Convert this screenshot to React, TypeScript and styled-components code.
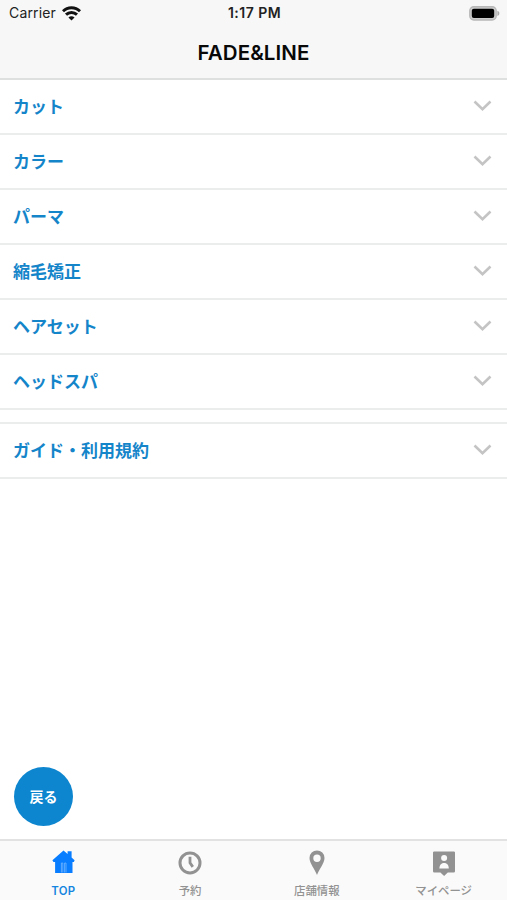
import React from "react";
import styled, { createGlobalStyle } from "styled-components";

const Global = createGlobalStyle`
  * { box-sizing: border-box; }
  body { margin: 0; background: #fff; }
  button { border: 0; padding: 0; background: none; font: inherit; color: inherit; }
`;

const Screen = styled.div`
  display: flex;
  flex-direction: column;
  width: 507px;
  height: 900px;
  overflow: hidden;
  background: #fff;
  font-family: Inter, "Noto Sans CJK JP", sans-serif;
`;

const Header = styled.header`
  height: 80px;
  background: #f7f7f7;
  border-bottom: 2px solid #dedfdf;
`;

const StatusBar = styled.div`
  display: grid;
  grid-template-columns: 1fr auto 1fr;
  align-items: center;
  height: 26px;
  padding: 0 7px 0 9px;
  font-size: 14px;
  line-height: 26px;
  color: #222;
`;

const Carrier = styled.div`
  display: flex;
  align-items: center;
  gap: 6px;
  letter-spacing: 0.15px;
`;

const Time = styled.div`
  font-weight: 600;
  font-size: 14px;
  letter-spacing: 0.45px;
`;

const Battery = styled.svg`
  justify-self: end;
`;

const Title = styled.h1`
  margin: 0;
  font-size: 20.5px;
  font-weight: 600;
  line-height: 53px;
  letter-spacing: 0.08px;
  text-align: center;
  color: #080808;
`;

const Main = styled.main`
  flex: 1;
  display: flex;
  flex-direction: column;
`;

const Row = styled.button`
  display: flex;
  align-items: center;
  justify-content: space-between;
  width: 100%;
  height: 55px;
  padding: 0 15px 0 13px;
  border-bottom: 2px solid #ebecec;
  font-size: 17px;
  line-height: 25px;
  font-weight: 700;
  color: #1585ca;
`;

const RowLabel = styled.span`
  padding-top: 2px;
`;

const RowChevron = styled.svg`
  flex: none;
  margin-bottom: 2px;
`;

const Group = styled.section<{ $separate?: boolean }>`
  margin-top: ${(p) => (p.$separate ? "12px" : "0")};
  border-top: ${(p) => (p.$separate ? "2px solid #ebecec" : "0")};
`;

const BackButton = styled.button`
  width: 59px;
  height: 59px;
  margin: auto 0 13px 14px;
  border-radius: 50%;
  background: #0d86cf;
  color: #fff;
  font-size: 14px;
  font-weight: 700;
  padding-bottom: 1px;
`;

const TabBar = styled.nav`
  display: grid;
  grid-template-columns: repeat(4, 1fr);
  height: 61px;
  background: #fafafa;
  border-top: 2px solid #e2e2e2;
`;

const Tab = styled.button<{ $active?: boolean }>`
  display: flex;
  flex-direction: column;
  align-items: center;
  padding-top: 7px;
  font-size: 11.4px;
  font-weight: ${(p) => (p.$active ? 600 : 500)};
  line-height: 16px;
  letter-spacing: ${(p) => (p.$active ? "0.3px" : "0")};
  color: ${(p) => (p.$active ? "#1585e0" : "#929292")};
`;

const TabIcon = styled.svg`
  width: 28px;
  height: 28px;
  margin-bottom: 7px;
  flex: none;
`;

const Chevron = () => (
  <RowChevron width="19" height="12" viewBox="0 0 19 12" fill="none" stroke="#c4c4c4" strokeWidth="2.6">
    <path d="M1.5 1.5 9.5 9.3 17.5 1.5" />
  </RowChevron>
);

const WifiIcon = () => (
  <svg width="19" height="15" viewBox="0 0 18 14" fill="none" stroke="#111" strokeWidth="2.8">
    <path d="M.9 4.9C5.4.4 12.6.4 17.1 4.9" />
    <path d="M3.8 8.1c2.9-2.8 7.5-2.8 10.4 0" />
    <path d="M9 13.6 6.1 10.8c1.6-1.5 4.2-1.5 5.8 0Z" fill="#111" stroke="none" />
  </svg>
);

const BatteryIcon = () => (
  <Battery width="31" height="15" viewBox="0 0 31 15">
    <rect x=".8" y=".8" width="26.4" height="13.2" rx="4" fill="#ccc" stroke="#b8b8b8" strokeWidth="1.4" />
    <rect x="2.8" y="2.8" width="22.4" height="9.2" rx="2" fill="#000" />
    <path d="M28.4 4.8v5.2c2.6-.9 2.6-4.3 0-5.2Z" fill="#aaa" />
  </Battery>
);

const HomeIcon = () => (
  <TabIcon viewBox="0 0 28 28">
    <path d="M14.5 2.6 18.6 6V3.2h4v6.2l3 2.9-.7 1.8h-1.4V25H6.1V14.1H4.5L3.4 12.3Z" fill="#087dff" />
    <path d="M12.4 24.5V15h1.4v9.5M15.6 24.5V15h1.4v9.5" fill="none" stroke="#72b6ff" strokeWidth=".8" />
  </TabIcon>
);

const ClockIcon = () => (
  <TabIcon viewBox="0 0 28 28" fill="none" stroke="#929292">
    <circle cx="14" cy="14.9" r="10" strokeWidth="3" />
    <path d="M14 8.7v6.2l2.8 4" strokeWidth="2.8" />
  </TabIcon>
);

const PinIcon = () => (
  <TabIcon viewBox="0 0 28 28">
    <path
      d="M14 2.4a7.5 7.5 0 0 0-7.5 7.5c0 5.3 5.2 10.8 7.5 17.2 2.3-6.4 7.5-11.9 7.5-17.2A7.5 7.5 0 0 0 14 2.4Zm0 4.2a3.7 3.7 0 1 1 0 7.4 3.7 3.7 0 0 1 0-7.4Z"
      fill="#929292"
      fillRule="evenodd"
    />
  </TabIcon>
);

const ProfileIcon = () => (
  <TabIcon viewBox="0 0 28 28">
    <path d="M4.2 3.4h19.6a1.2 1.2 0 0 1 1.2 1.2v18.6a1.2 1.2 0 0 1-1.2 1.2h-6L14.1 28l-3.7-3.6H4.2A1.2 1.2 0 0 1 3 23.2V4.6a1.2 1.2 0 0 1 1.2-1.2Z" fill="#929292" />
    <circle cx="14.1" cy="10" r="3" fill="#fafafa" />
    <path d="M9.4 20.4c0-7.2 9.4-7.2 9.4 0Z" fill="#fafafa" />
  </TabIcon>
);

const services = ["カット", "カラー", "パーマ", "縮毛矯正", "ヘアセット", "ヘッドスパ"];

const tabs = [
  { label: "TOP", Icon: HomeIcon, active: true },
  { label: "予約", Icon: ClockIcon },
  { label: "店舗情報", Icon: PinIcon },
  { label: "マイページ", Icon: ProfileIcon },
];

export default function App() {
  return (
    <Screen>
      <Global />
      <Header>
        <StatusBar>
          <Carrier>Carrier <WifiIcon /></Carrier>
          <Time>1:17 PM</Time>
          <BatteryIcon />
        </StatusBar>
        <Title>FADE&amp;LINE</Title>
      </Header>
      <Main>
        <Group>
          {services.map((name) => (
            <Row key={name}><RowLabel>{name}</RowLabel><Chevron /></Row>
          ))}
        </Group>
        <Group $separate>
          <Row><RowLabel>ガイド・利用規約</RowLabel><Chevron /></Row>
        </Group>
        <BackButton>戻る</BackButton>
      </Main>
      <TabBar>
        {tabs.map(({ label, Icon, active }) => (
          <Tab key={label} $active={active}><Icon />{label}</Tab>
        ))}
      </TabBar>
    </Screen>
  );
}
